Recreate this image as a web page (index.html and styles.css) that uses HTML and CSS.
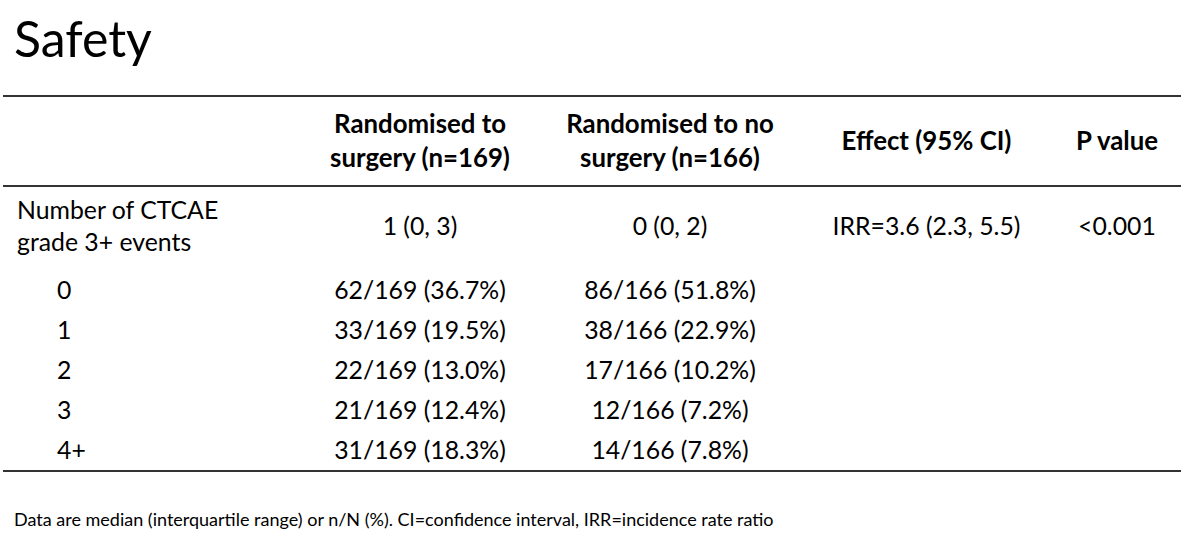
FILE: index.html
```html
<!DOCTYPE html>
<html lang="en">
<head>
<meta charset="utf-8">
<title>Safety</title>
<link rel="stylesheet" href="styles.css">
</head>
<body>
<main class="slide">
  <h1 class="title">Safety</h1>
  <table class="safety">
    <colgroup>
      <col class="c0"><col class="c1"><col class="c2"><col class="c3"><col class="c4">
    </colgroup>
    <thead>
      <tr>
        <th></th>
        <th>Randomised to<br>surgery (n=169)</th>
        <th>Randomised to no<br>surgery (n=166)</th>
        <th>Effect (95% CI)</th>
        <th>P value</th>
      </tr>
    </thead>
    <tbody>
      <tr class="main-row">
        <td class="label">Number of CTCAE<br>grade 3+ events</td>
        <td>1 (0, 3)</td>
        <td>0 (0, 2)</td>
        <td>IRR=3.6 (2.3, 5.5)</td>
        <td>&lt;0.001</td>
      </tr>
      <tr class="sub-row"><td class="label sub">0</td><td>62/169 (36.7%)</td><td>86/166 (51.8%)</td><td></td><td></td></tr>
      <tr class="sub-row"><td class="label sub">1</td><td>33/169 (19.5%)</td><td>38/166 (22.9%)</td><td></td><td></td></tr>
      <tr class="sub-row"><td class="label sub">2</td><td>22/169 (13.0%)</td><td>17/166 (10.2%)</td><td></td><td></td></tr>
      <tr class="sub-row"><td class="label sub">3</td><td>21/169 (12.4%)</td><td>12/166 (7.2%)</td><td></td><td></td></tr>
      <tr class="sub-row"><td class="label sub">4+</td><td>31/169 (18.3%)</td><td>14/166 (7.8%)</td><td></td><td></td></tr>
    </tbody>
  </table>
  <p class="note">Data are median (interquartile range) or n/N (%). CI=confidence interval, IRR=incidence rate ratio</p>
</main>
</body>
</html>
```

FILE: styles.css
```css
html, body {
  margin: 0;
  padding: 0;
  background: #ffffff;
}

body {
  font-family: Lato, "Open Sans", "Liberation Sans", sans-serif;
  color: #000;
  width: 1200px;
  height: 540px;
  overflow: hidden;
}

.slide {
  padding: 8px 19px 0 3px;
}

.title {
  margin: 0 0 27px 11px;
  font-size: 50px;
  font-weight: 400;
  line-height: 60px;
}

.safety {
  width: 1178px;
  border-collapse: collapse;
  table-layout: fixed;
  font-size: 24.8px;
}

.c0 { width: 297px; }
.c1 { width: 240px; }
.c2 { width: 260px; }
.c3 { width: 253px; }
.c4 { width: 128px; }

.safety thead tr {
  border-top: 2px solid #333333;
  border-bottom: 2px solid #333333;
}

.safety th {
  font-size: 25.8px;
  font-weight: 700;
  line-height: 34px;
  padding: 9px 0 11px;
  text-align: center;
  vertical-align: middle;
}

.safety td {
  text-align: center;
  vertical-align: middle;
  padding: 0;
}

.main-row td {
  line-height: 32px;
  padding: 7px 0 12px;
}

.sub-row td {
  height: 40px;
  line-height: 40px;
}

.safety tbody tr:last-child {
  border-bottom: 2px solid #333333;
}

.safety td.label {
  text-align: left;
  padding-left: 14px;
}

.safety td.label.sub {
  padding-left: 54px;
}

.note {
  margin: 35px 0 0 11px;
  font-size: 18px;
  line-height: 24px;
}
```
